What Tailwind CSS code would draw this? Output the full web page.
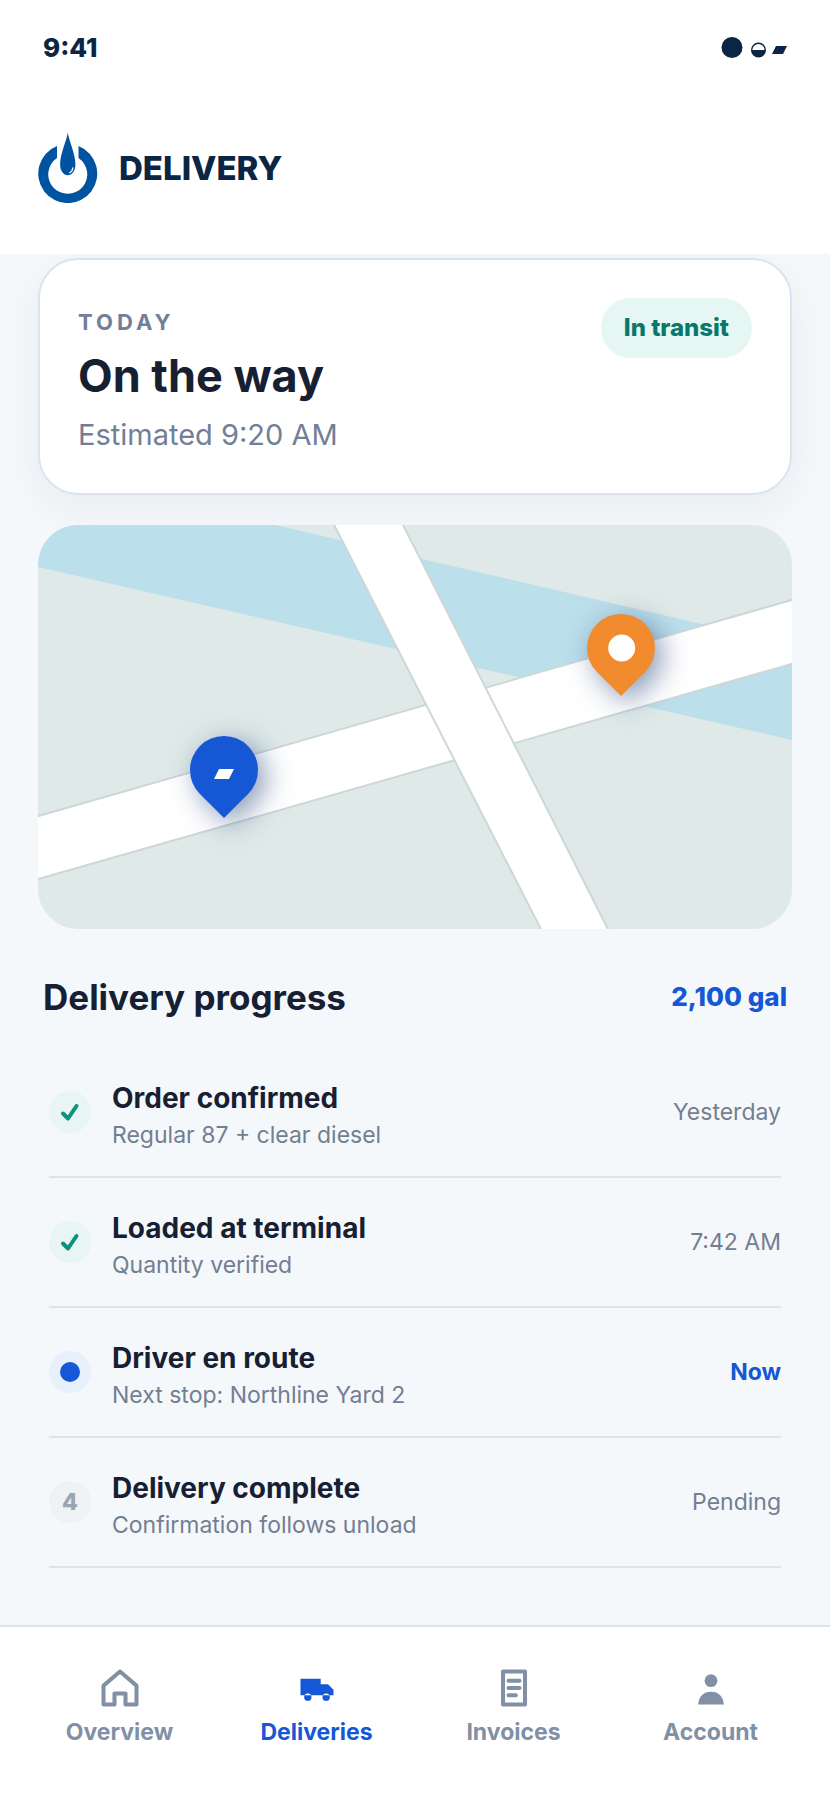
<!DOCTYPE html>
<html lang="en">
<head>
    <meta charset="UTF-8">
    <meta name="viewport" content="width=device-width, initial-scale=1.0">
    <title>Delivery</title>
    <script src="https://cdn.jsdelivr.net/npm/@tailwindcss/browser@4"></script>
</head>
<body class="flex min-h-screen flex-col bg-[#f4f8fb] font-['Inter',sans-serif] text-[#172033]">

    <header class="relative z-10 bg-white px-[38px] pt-8 pb-[51px] text-[#0b2545]">
        <!-- status bar -->
        <div class="flex items-center justify-between px-[5px] text-[26px] leading-8 font-extrabold">
            <span>9:41</span>
            <svg class="h-[22px] w-[66px]" viewBox="0 0 66 22" fill="currentColor" aria-hidden="true">
                <circle cx="11" cy="10.5" r="10.5"/>
                <circle cx="37.5" cy="13" r="6.8" fill="none" stroke="currentColor" stroke-width="1.4"/>
                <path d="M30.5 13h14a7 7 0 0 1-14 0z"/>
                <path d="M55 9h11l-4 8H51z"/>
            </svg>
        </div>

        <div class="mt-[69px] flex items-center gap-[21px]">
            <svg class="h-[70px] w-[60px]" viewBox="0 0 60 70" aria-hidden="true">
                <path fill="#0053a0" d="M19 13.1A29.5 29.5 0 1 0 40.5 13.1V25.1A19.5 19.5 0 1 1 19 25.1z"/>
                <path fill="#0053a0" d="M29.8 0C31.3 8.5 37.4 21 37.4 31.5C37.4 38 34 42.3 29.8 42.3S22.1 38 22.1 31.5C22.1 21 28.2 8.5 29.8 0z"/>
                <path fill="none" stroke="#fff" stroke-width="1.3" stroke-linecap="round" d="M34.8 35C34.6 37 33.5 38.8 31.8 39.6"/>
            </svg>
            <h1 class="text-[33px] leading-10 font-extrabold">DELIVERY</h1>
        </div>
    </header>

    <main class="px-[38px] pt-1">
        <section class="flex items-start justify-between rounded-[40px] border-2 border-[#dbe4ee] bg-white p-[38px] shadow-[0_14px_40px_rgba(23,32,51,0.05)]">
            <div class="pt-2">
                <p class="text-[22px] leading-8 font-bold tracking-[4px] text-[#718096]">TODAY</p>
                <h2 class="mt-2.5 text-[45px] leading-14 font-bold">On the way</h2>
                <p class="mt-[11px] text-[29px] leading-10 text-[#718096]">Estimated 9:20 AM</p>
            </div>
            <span class="rounded-full bg-[#e6f6f3] px-[23px] py-4 text-[24px] leading-7 font-extrabold text-[#08786d]">In transit</span>
        </section>

        <section class="relative mt-[30px] h-[404px] overflow-hidden rounded-[40px] bg-[#dfe9e8]" aria-label="Route map">
            <svg class="h-full w-full" viewBox="0 0 754 404" preserveAspectRatio="none" aria-hidden="true">
                <path fill="#bbdfeb" d="M0-55 754 120V215L0 42z"/>
                <g fill="#fff" stroke="#ccd8d7" stroke-width="2">
                    <path d="M-10 294 764 72V136L-10 357z"/>
                    <path d="M291-10H360L575 414H508z"/>
                </g>
            </svg>
            <!-- pins -->
            <div class="absolute bottom-[31%] left-[152px] flex size-[68px] -rotate-45 items-center justify-center rounded-full rounded-bl-none bg-[#1557d5] shadow-[0_10px_28px_rgba(18,52,110,0.5)]">
                <svg class="h-5 w-5 rotate-45" viewBox="0 0 20 20" fill="#fff"><path d="M5 9h15l-5 10H0z"/></svg>
            </div>
            <div class="absolute top-[22%] right-[137px] flex size-[68px] -rotate-45 items-center justify-center rounded-full rounded-bl-none bg-[#f28a2e] shadow-[0_10px_28px_rgba(18,52,110,0.5)]">
                <span class="size-[27px] rounded-full bg-white"></span>
            </div>
        </section>

        <div class="mt-12 flex items-center justify-between px-[5px]">
            <h2 class="text-[35px] leading-10 font-bold">Delivery progress</h2>
            <span class="text-[26px] leading-8 font-extrabold text-[#1557d5]">2,100 gal</span>
        </div>

        <ol class="mx-[11px] mt-[31px] mb-12">
            <li class="flex h-[130px] items-center gap-[21px] border-b-2 border-[#dbe4ea]">
                <span class="flex size-[42px] items-center justify-center rounded-full bg-[#e8f5f2]">
                    <svg class="size-5" viewBox="0 0 20 20" fill="none" stroke="#0d9180" stroke-width="4" stroke-linecap="round" stroke-linejoin="round"><path d="M3 11.5 8 16.5 16.5 4"/></svg>
                </span>
                <div class="flex-1">
                    <h3 class="text-[28px] leading-10 font-bold">Order confirmed</h3>
                    <p class="mt-[5px] text-[23px] leading-6 text-[#737e91]">Regular 87 + clear diesel</p>
                </div>
                <span class="text-[23px] text-[#737e91]">Yesterday</span>
            </li>
            <li class="flex h-[130px] items-center gap-[21px] border-b-2 border-[#dbe4ea]">
                <span class="flex size-[42px] items-center justify-center rounded-full bg-[#e8f5f2]">
                    <svg class="size-5" viewBox="0 0 20 20" fill="none" stroke="#0d9180" stroke-width="4" stroke-linecap="round" stroke-linejoin="round"><path d="M3 11.5 8 16.5 16.5 4"/></svg>
                </span>
                <div class="flex-1">
                    <h3 class="text-[28px] leading-10 font-bold">Loaded at terminal</h3>
                    <p class="mt-[5px] text-[23px] leading-6 text-[#737e91]">Quantity verified</p>
                </div>
                <span class="text-[23px] text-[#737e91]">7:42 AM</span>
            </li>
            <li class="flex h-[130px] items-center gap-[21px] border-b-2 border-[#dbe4ea]">
                <span class="flex size-[42px] items-center justify-center rounded-full bg-[#e8f0fe]">
                    <span class="size-5 rounded-full bg-[#1557d5]"></span>
                </span>
                <div class="flex-1">
                    <h3 class="text-[28px] leading-10 font-bold">Driver en route</h3>
                    <p class="mt-[5px] text-[23px] leading-6 text-[#737e91]">Next stop: Northline Yard 2</p>
                </div>
                <span class="text-[23px] font-bold text-[#1557d5]">Now</span>
            </li>
            <li class="flex h-[130px] items-center gap-[21px] border-b-2 border-[#dbe4ea]">
                <span class="flex size-[42px] items-center justify-center rounded-full bg-[#eef2f5] text-[23px] font-extrabold text-[#9aa3b1]">4</span>
                <div class="flex-1">
                    <h3 class="text-[28px] leading-10 font-bold">Delivery complete</h3>
                    <p class="mt-[5px] text-[23px] leading-6 text-[#737e91]">Confirmation follows unload</p>
                </div>
                <span class="text-[23px] text-[#737e91]">Pending</span>
            </li>
        </ol>
    </main>

    <nav class="mt-auto grid grid-cols-4 border-t-2 border-[#dbe4ea] bg-white px-[21px] pt-[39px] pb-[54px] text-[23px] leading-7 font-bold text-[#8190a5]">
        <a href="#" class="flex flex-col items-center gap-2">
            <svg class="size-11" viewBox="0 0 24 24" fill="none" stroke="currentColor" stroke-width="2.2" stroke-linejoin="round"><path d="M3 10.7 12 3l9 7.7V21h-6v-6H9v6H3z"/></svg>
            Overview
        </a>
        <a href="#" class="flex flex-col items-center gap-2 text-[#1557d5]" aria-current="page">
            <svg class="size-11" viewBox="0 0 24 24" fill="currentColor" fill-rule="evenodd"><path d="M3 7h11v3h4l3 3v3H3zM5 17a2 2 0 1 0 4 0 2 2 0 1 0-4 0zM15 17a2 2 0 1 0 4 0 2 2 0 1 0-4 0z"/></svg>
            Deliveries
        </a>
        <a href="#" class="flex flex-col items-center gap-2">
            <svg class="size-11" viewBox="0 0 24 24" fill="none" stroke="currentColor" stroke-width="2.2" stroke-linecap="round" stroke-linejoin="round"><path d="M6 3h12v18H6zM9 8h6M9 12h6M9 16h4"/></svg>
            Invoices
        </a>
        <a href="#" class="flex flex-col items-center gap-2">
            <svg class="size-11" viewBox="0 0 24 24" fill="currentColor"><circle cx="12" cy="8" r="3.5"/><path d="M5 21c.3-4.4 2.8-7 7-7s6.7 2.6 7 7z"/></svg>
            Account
        </a>
    </nav>

</body>
</html>
